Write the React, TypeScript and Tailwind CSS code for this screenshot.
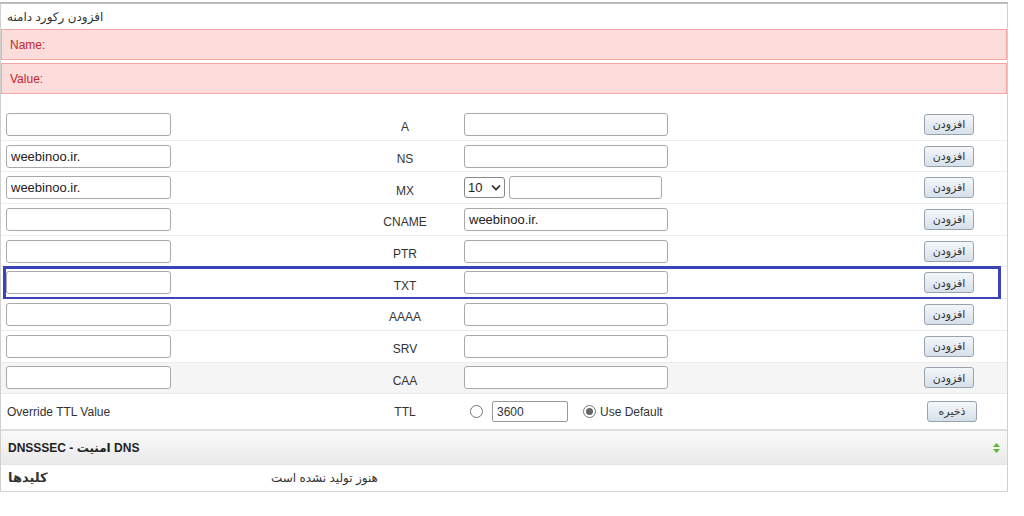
const rows = [
  { label: "A", left: "", right: "" },
  { label: "NS", left: "weebinoo.ir.", right: "" },
  { label: "MX", left: "weebinoo.ir.", right: "", mx: true },
  { label: "CNAME", left: "", right: "weebinoo.ir." },
  { label: "PTR", left: "", right: "" },
  { label: "TXT", left: "", right: "", hl: true },
  { label: "AAAA", left: "", right: "" },
  { label: "SRV", left: "", right: "" },
  { label: "CAA", left: "", right: "" },
];

const font = { fontFamily: '"Liberation Sans", "DejaVu Sans", sans-serif' };

function Btn({ text }: { text: string }) {
  return (
    <button className="h-[21px] w-[50px] rounded-[3px] border border-[#9aa3ad] bg-gradient-to-b from-[#f4f7fa] to-[#d6e0ea] text-[11px] text-[#333]">
      {text}
    </button>
  );
}

function TextBox({ value, w }: { value: string; w: string }) {
  return (
    <input
      readOnly
      value={value}
      className={`${w} h-[23px] rounded-[3px] border border-[#a9a9a9] bg-white px-1 text-[13px] text-[#222] outline-none`}
    />
  );
}

export default function App() {
  return (
    <div className="h-[516px] w-[1024px] bg-white pt-[2px] text-[12px] text-[#333]" style={font}>
      <div className="w-[1008px] border border-[#d0d0d0] border-t-[2px] border-t-[#bbb]">
        <div className="px-[6px] pb-[3px] pt-[4px] text-[12px]" dir="rtl" style={{ textAlign: "left" }}>
          افزودن رکورد دامنه
        </div>
        <div className="mb-[3px] flex h-[31px] items-center border border-[#f2a7a7] bg-[#fddcdc] px-[8px] text-[12px] text-[#c0262d]">
          Name:
        </div>
        <div className="flex h-[31px] items-center border border-[#f2a7a7] bg-[#fddcdc] px-[8px] text-[12px] text-[#c0262d]">
          Value:
        </div>
        <div className="h-[15px]" />
        {rows.map((r) => (
          <div
            key={r.label}
            className={`relative flex h-[31.7px] items-center border-b border-[#ececec] ${r.label === "CAA" ? "bg-[#f5f5f5]" : "bg-white"}`}
          >
            {r.hl && (
              <div className="pointer-events-none absolute left-[2px] right-[6px] top-[-1px] bottom-[-2px] border-[3px] border-[#3a44b8]" />
            )}
            <div className="w-[345px] pl-[5px]">
              <TextBox value={r.left} w="w-[165px]" />
            </div>
            <div className="w-[118px] pt-[6px] text-center text-[12px]">{r.label}</div>
            <div className="flex w-[455px] items-center gap-[4px]">
              {r.mx ? (
                <>
                  <div className="flex h-[21px] w-[41px] items-center justify-between rounded-[3px] border border-[#888] px-[3px] text-[13px] text-[#222]">
                    10
                    <svg width="10" height="7" viewBox="0 0 10 7"><path d="M1 1.5l4 4 4-4" fill="none" stroke="#222" strokeWidth="1.6" /></svg>
                  </div>
                  <TextBox value="" w="w-[153px]" />
                </>
              ) : (
                <TextBox value={r.right} w="w-[204px]" />
              )}
            </div>
            <div className="pl-[5px]">
              <Btn text="افزودن" />
            </div>
          </div>
        ))}
        <div className="flex h-[37px] items-center border-b-[2px] border-[#ddd]">
          <div className="w-[345px] pl-[6px]">Override TTL Value</div>
          <div className="w-[118px] text-center">TTL</div>
          <div className="flex w-[455px] items-center">
            <span className="ml-[6px] h-[13px] w-[13px] rounded-full border border-[#777] bg-white" />
            <span className="ml-[9px] flex h-[21px] w-[76px] items-center rounded-[2px] border border-[#999] px-1 text-[12px]">3600</span>
            <span className="ml-[15px] flex h-[13px] w-[13px] items-center justify-center rounded-full border border-[#777]">
              <span className="h-[7px] w-[7px] rounded-full bg-[#666]" />
            </span>
            <span className="ml-[4px]">Use Default</span>
          </div>
          <div className="pl-[8px]">
            <Btn text="ذخیره" />
          </div>
        </div>
        <div className="flex h-[33px] items-center justify-between bg-gradient-to-b from-[#fafafa] to-[#e9e9e9] px-[7px]">
          <span className="text-[12px] font-bold text-[#222]">DNSSSEC - امنیت DNS</span>
          <svg width="7" height="10" viewBox="0 0 7 10"><path d="M3.5 0L7 4H0z M3.5 10L0 6h7z" fill="#5cb82f" /></svg>
        </div>
        <div className="flex h-[27px] items-center border-t border-[#e4e4e4]">
          <span className="w-[270px] pl-[7px] text-[13px] font-bold text-[#333]">کلیدها</span>
          <span className="text-[12px]">هنوز تولید نشده است</span>
        </div>
      </div>
    </div>
  );
}
